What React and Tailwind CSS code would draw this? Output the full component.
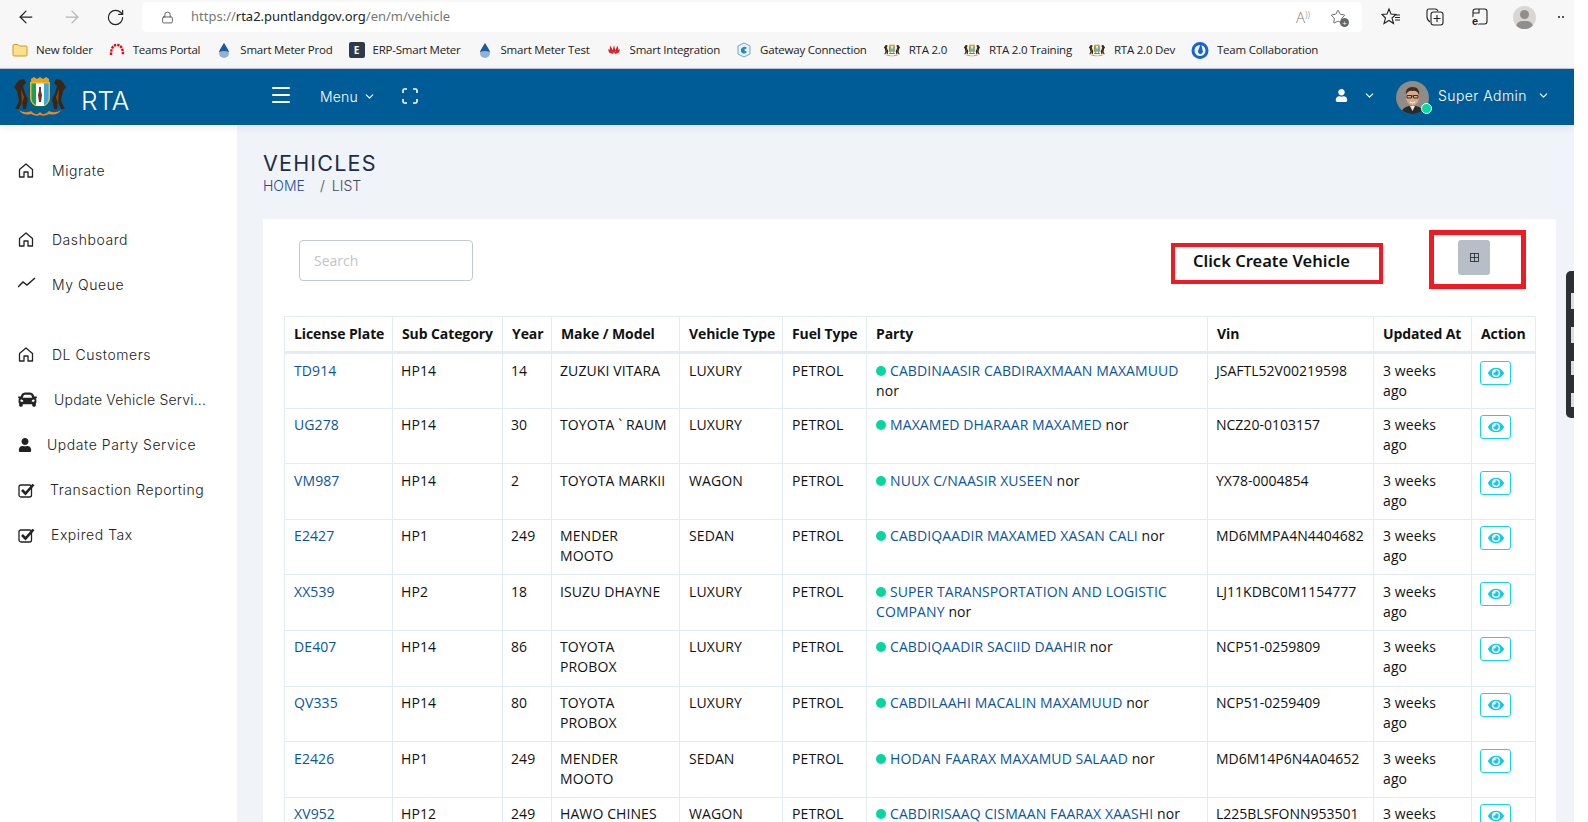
import { ArrowLeft, ArrowRight, RotateCw, Lock, Menu, ChevronDown, Star } from 'lucide-react';
import { FaCar, FaUser, FaEye } from 'react-icons/fa';

const ROWS = [
  { plate: 'TD914', sub: 'HP14', year: '14', model: 'ZUZUKI VITARA', type: 'LUXURY', party: 'CABDINAASIR CABDIRAXMAAN MAXAMUUD', vin: 'JSAFTL52V00219598' },
  { plate: 'UG278', sub: 'HP14', year: '30', model: 'TOYOTA ` RAUM', type: 'LUXURY', party: 'MAXAMED DHARAAR MAXAMED', vin: 'NCZ20-0103157' },
  { plate: 'VM987', sub: 'HP14', year: '2', model: 'TOYOTA MARKII', type: 'WAGON', party: 'NUUX C/NAASIR XUSEEN', vin: 'YX78-0004854' },
  { plate: 'E2427', sub: 'HP1', year: '249', model: 'MENDER MOOTO', type: 'SEDAN', party: 'CABDIQAADIR MAXAMED XASAN CALI', vin: 'MD6MMPA4N4404682' },
  { plate: 'XX539', sub: 'HP2', year: '18', model: 'ISUZU DHAYNE', type: 'LUXURY', party: 'SUPER TARANSPORTATION AND LOGISTIC COMPANY', vin: 'LJ11KDBC0M1154777' },
  { plate: 'DE407', sub: 'HP14', year: '86', model: 'TOYOTA PROBOX', type: 'LUXURY', party: 'CABDIQAADIR SACIID DAAHIR', vin: 'NCP51-0259809' },
  { plate: 'QV335', sub: 'HP14', year: '80', model: 'TOYOTA PROBOX', type: 'LUXURY', party: 'CABDILAAHI MACALIN MAXAMUUD', vin: 'NCP51-0259409' },
  { plate: 'E2426', sub: 'HP1', year: '249', model: 'MENDER MOOTO', type: 'SEDAN', party: 'HODAN FAARAX MAXAMUD SALAAD', vin: 'MD6M14P6N4A04652' },
  { plate: 'XV952', sub: 'HP12', year: '249', model: 'HAWO CHINES', type: 'WAGON', party: 'CABDIRISAAQ CISMAAN FAARAX XAASHI', vin: 'L225BLSFONN953501' },
];

const HEADERS = ['License Plate', 'Sub Category', 'Year', 'Make / Model', 'Vehicle Type', 'Fuel Type', 'Party', 'Vin', 'Updated At', 'Action'];

function Crest({ className }) {
  return (
    <svg viewBox="0 0 58 40" className={className}>
      <path d="M4 32 L8 24 L6 14 L3 10 L8 3 L13 2 L15 6 L12 9 L14 16 L17 22 L15 32 L12 32 L11 25 L8 32Z" fill="#3a2614" />
      <path d="M54 32 L50 24 L52 14 L55 10 L50 3 L45 2 L43 6 L46 9 L44 16 L41 22 L43 32 L46 32 L47 25 L50 32Z" fill="#3a2614" />
      <path d="M10 12 L13 20 L11 27Z M48 12 L45 20 L47 27Z" fill="#7a4a1e" />
      <path d="M20 2 L23 0 L26 2 L29 0 L32 2 L35 0 L38 2 L38 6 L20 6Z" fill="#e8a020" />
      <path d="M19 5 H39 V21 Q39 28 29 31 Q19 28 19 21Z" fill="#f0b429" />
      <path d="M20.5 6.5 H25 V28 Q20.5 26 20.5 21Z" fill="#17a05a" />
      <path d="M25 6.5 H33 V29.5 L29 30 L25 28.5Z" fill="#fff" />
      <path d="M33 6.5 H37.5 V21 Q37.5 26 33 28Z" fill="#3aa6dc" />
      <path d="M28 10 H30 V14 L31 18 L30 25 H28 L27 18 L28 14Z" fill="#6b3a1a" />
      <path d="M19 29 H39 L37 31 H21Z" fill="#0f6b4a" />
      <path d="M8 33 Q14 37 20 34 Q25 40 29 35 Q33 40 38 34 Q44 37 50 33 Q46 39 38 37 Q33 40 29 38 Q25 40 20 37 Q12 39 8 33Z" fill="#e98a1a" />
    </svg>
  );
}

function FolderIcon() {
  return (
    <svg viewBox="0 0 16 16" className="w-[16px] h-[16px]">
      <path d="M1 3.5 Q1 2.5 2 2.5 H6 L7.5 4 H14 Q15 4 15 5 V13 Q15 14 14 14 H2 Q1 14 1 13Z" fill="#fbe08e" stroke="#d09a1c" />
    </svg>
  );
}

function ArchIcon() {
  return (
    <svg viewBox="0 0 16 16" className="w-[16px] h-[16px]">
      <path d="M2 13 Q2 3 8 3 Q14 3 14 13" fill="none" stroke="#d5101e" strokeWidth="2.4" strokeDasharray="2.4 0.9" />
    </svg>
  );
}

function DropIcon() {
  return (
    <svg viewBox="0 0 16 16" className="w-[16px] h-[16px]">
      <path d="M8 1 Q13 9 13 11 A5 5 0 0 1 3 11 Q3 9 8 1Z" fill="#8fb2d6" />
      <path d="M8 1 Q13 9 13 10 Q8 8 3 10 Q3 9 8 1Z" fill="#1c5a9e" />
    </svg>
  );
}

function ErpIcon() {
  return (
    <div className="w-[16px] h-[16px] rounded-[2px] bg-[#2f3b4a] text-white text-[10px] font-bold flex items-center justify-center">E</div>
  );
}

function PetalIcon() {
  return (
    <svg viewBox="0 0 16 16" className="w-[16px] h-[16px]">
      <path d="M8 3 L9.5 9 L8 12 L6.5 9Z M2 7 L7 10 L7 12 L3 10.5Z M14 7 L9 10 L9 12 L13 10.5Z M4.5 3.5 L7 9 L6 10.5 L3.5 7.5Z M11.5 3.5 L9 9 L10 10.5 L12.5 7.5Z" fill="#d8232a" />
    </svg>
  );
}

function GatewayIcon() {
  return (
    <svg viewBox="0 0 16 16" className="w-[16px] h-[16px]">
      <path d="M8 1 L14 4 V12 L8 15 L2 12 V4Z" fill="#e8f2f8" stroke="#6fa8c8" />
      <path d="M5 7 Q8 3 11 6 L8 8 L11 10 Q8 13 5 10Z" fill="#2b86b8" />
    </svg>
  );
}

function TeamIcon() {
  return (
    <svg viewBox="0 0 18 18" className="w-[18px] h-[18px]">
      <circle cx="9" cy="9.5" r="7" fill="none" stroke="#1565d8" strokeWidth="3" />
      <path d="M10 2 L11.5 9 A2.5 2.5 0 1 1 7 10 Z" fill="#1565d8" />
    </svg>
  );
}

const BOOKMARKS = [
  { label: 'New folder', icon: <FolderIcon /> },
  { label: 'Teams Portal', icon: <ArchIcon /> },
  { label: 'Smart Meter Prod', icon: <DropIcon /> },
  { label: 'ERP-Smart Meter', icon: <ErpIcon /> },
  { label: 'Smart Meter Test', icon: <DropIcon /> },
  { label: 'Smart Integration', icon: <PetalIcon /> },
  { label: 'Gateway Connection', icon: <GatewayIcon /> },
  { label: 'RTA 2.0', icon: <Crest className="w-[18px] h-[17px]" /> },
  { label: 'RTA 2.0 Training', icon: <Crest className="w-[18px] h-[17px]" /> },
  { label: 'RTA 2.0 Dev', icon: <Crest className="w-[18px] h-[17px]" /> },
  { label: 'Team Collaboration', icon: <TeamIcon /> },
];

function BrowserBar() {
  return (
    <div className="h-[69px] bg-[#f7f7f7] border-b border-[#c8c8c8] font-['Open_Sans',sans-serif]">
      <div className="flex items-center h-[36px] pb-[2px]">
        <div className="w-[142px] flex items-center pl-[16px] text-[#222]">
          <ArrowLeft size={20} strokeWidth={1.5} />
          <ArrowRight size={20} strokeWidth={1.5} className="ml-[26px] text-[#b5b5b5]" />
          <RotateCw size={19} strokeWidth={1.5} className="ml-[24px]" />
        </div>
        <div className="w-[1220px] h-[30px] bg-white rounded-[5px] flex items-center pl-[19px]">
          <Lock size={13} strokeWidth={1.5} className="text-[#444]" />
          <span className="ml-[17px] text-[13px] text-[#777] font-['Noto_Sans',sans-serif]">
            https://<span className="text-[#222]">rta2.puntlandgov.org</span>/en/m/vehicle
          </span>
          <span className="ml-auto text-[15px] text-[#777] leading-none font-light">A<span className="text-[9px] align-top">))</span></span>
          <span className="relative ml-[20px] mr-[16px]">
            <Star size={16} strokeWidth={1.3} className="text-[#555]" />
            <span className="absolute right-[-3px] bottom-[-2px] w-[9px] h-[9px] rounded-full bg-[#666] text-white text-[8px] leading-[9px] text-center">+</span>
          </span>
        </div>
        <div className="flex items-center text-[#222]">
          <svg viewBox="0 0 20 20" className="w-[20px] h-[20px] ml-[19px]" fill="none" stroke="currentColor" strokeWidth="1.1">
            <path d="M8 2 L10 7 L15 7.5 L11 11 L12.5 16.5 L8 13.5 L3 16.5 L4.5 11 L1 7.5 L6 7Z" />
            <path d="M14 10.5 H19 M14 13 H19 M15 8 H19" />
          </svg>
          <svg viewBox="0 0 20 20" className="w-[20px] h-[20px] ml-[24px]" fill="none" stroke="currentColor" strokeWidth="1.1">
            <path d="M5 15 Q2 13 2 10 V4 Q2 2 4 2 H10 Q12 2 13 4" />
            <rect x="6" y="5" width="12" height="13" rx="2.5" />
            <path d="M12 8 V15 M8.5 11.5 H15.5" />
          </svg>
          <svg viewBox="0 0 20 20" className="w-[20px] h-[20px] ml-[24px]" fill="none" stroke="currentColor" strokeWidth="1.1">
            <rect x="4" y="2" width="14" height="15" rx="2.5" />
            <path d="M4 6 H10 V2" />
            <circle cx="6" cy="14" r="4.5" fill="#f7f7f7" stroke="none" />
            <text x="6" y="17.5" textAnchor="middle" fontSize="11" fontWeight="700" fill="#222" stroke="none" fontFamily="Liberation Sans, sans-serif">e</text>
          </svg>
          <div className="relative ml-[24px] w-[23px] h-[23px] rounded-full bg-[#d9d6d3] overflow-hidden">
            <div className="absolute left-[7px] top-[4px] w-[9px] h-[9px] rounded-full bg-[#8f8f8f]" />
            <div className="absolute left-[3px] top-[15px] w-[17px] h-[12px] rounded-full bg-[#8f8f8f]" />
          </div>
          <span className="ml-[22px] flex gap-[2px]">
            <span className="w-[2px] h-[2px] rounded-full bg-[#222]" />
            <span className="w-[2px] h-[2px] rounded-full bg-[#222]" />
          </span>
        </div>
      </div>
      <div className="flex items-center h-[28px] pl-[12px] gap-[16px] text-[11.5px] text-[#222] tracking-[-0.22px]">
        {BOOKMARKS.map((b) => (
          <div key={b.label} className="flex items-center gap-[8px] whitespace-nowrap">
            {b.icon}
            <span>{b.label}</span>
          </div>
        ))}
      </div>
    </div>
  );
}

function Avatar() {
  return (
    <div className="relative w-[33px] h-[33px]">
      <svg viewBox="0 0 33 33" className="w-[33px] h-[33px] rounded-full">
        <rect width="33" height="33" fill="#8f8b86" />
        <path d="M5 33 Q6 26 13 25 H20 Q27 26 28 33Z" fill="#2a2a2c" />
        <path d="M14 25 L16.5 30 L19 25Z" fill="#eee" />
        <ellipse cx="16.5" cy="16" rx="6.5" ry="8.5" fill="#d8a98c" />
        <path d="M10 14 Q9 6 16.5 6 Q24 6 23 14 Q21 9 16.5 10 Q12 9 10 14Z" fill="#3e2c20" />
        <path d="M11 14.5 H15.5 V17 H11Z M17.5 14.5 H22 V17 H17.5Z M15.5 15 H17.5" fill="none" stroke="#222" strokeWidth="0.9" />
        <path d="M14 21 Q16.5 23 19 21" fill="none" stroke="#fff" strokeWidth="1" />
      </svg>
      <span className="absolute right-[-3px] bottom-0 w-[11px] h-[11px] rounded-full bg-[#06d6a0] border border-white" />
    </div>
  );
}

function TopNav() {
  return (
    <header className="relative z-10 h-[56px] bg-[#005c97] text-white flex items-center font-['Inter',sans-serif] shadow-[0_2px_8px_rgba(60,80,120,0.1)]">
      <div className="w-[272px] flex items-center pl-[11px]">
        <Crest className="w-[58px] h-[40px]" />
        <span className="ml-[12px] mt-[8px] text-[26px] font-light leading-none">RTA</span>
      </div>
      <Menu size={24} strokeWidth={2} className="-ml-[3px] -mt-[5px]" />
      <span className="ml-[27px] -mt-[2px] text-[14px] font-light tracking-[0.2px]">Menu</span>
      <ChevronDown size={13} className="ml-[5px] -mt-[2px]" />
      <svg viewBox="0 0 16 16" className="w-[16px] h-[16px] ml-[26px] -mt-[2px]" fill="none" stroke="currentColor" strokeWidth="1.6">
        <path d="M1 5 V2.5 Q1 1 2.5 1 H5 M11 1 H13.5 Q15 1 15 2.5 V5 M15 11 V13.5 Q15 15 13.5 15 H11 M5 15 H2.5 Q1 15 1 13.5 V11" />
      </svg>
      <div className="ml-auto flex items-center pr-[24px] -mt-[3px]">
        <FaUser size={13} />
        <ChevronDown size={13} className="ml-[15px]" />
        <div className="ml-[20px] mt-[3px]"><Avatar /></div>
        <span className="ml-[9px] text-[14px] font-light tracking-[0.45px]">Super Admin</span>
        <ChevronDown size={13} className="ml-[10px]" />
      </div>
    </header>
  );
}

function HomeIcon() {
  return (
    <svg viewBox="0 0 16 15" className="w-[16px] h-[15px]" fill="none" stroke="#222" strokeWidth="1.3" strokeLinejoin="round">
      <path d="M8 1 L1.5 6.5 V14 H6 V9 H10 V14 H14.5 V6.5 Z" />
    </svg>
  );
}

function CheckBoxIcon() {
  return (
    <svg viewBox="0 0 18 16" className="w-[18px] h-[16px]" fill="none" stroke="#222">
      <rect x="1" y="3" width="12.5" height="12" rx="2" strokeWidth="1.3" />
      <path d="M4 8 L7.5 11.5 L15.5 2.5" strokeWidth="2.6" />
    </svg>
  );
}

function SideItem({ icon, label, textClass }) {
  return (
    <div className="h-[45px] flex items-center pl-[18px] text-[14px] font-light tracking-[0.55px] text-[#222] whitespace-nowrap">
      <span className="w-[20px] flex justify-start">{icon}</span>
      <span className={textClass}>{label}</span>
    </div>
  );
}

function Sidebar() {
  return (
    <aside className="w-[237px] shrink-0 bg-white pt-[23px] shadow-[3px_0_10px_rgba(60,80,120,0.1)] font-['Inter',sans-serif]">
      <SideItem icon={<HomeIcon />} label="Migrate" textClass="ml-[14px]" />
      <div className="h-[24px]" />
      <SideItem icon={<HomeIcon />} label="Dashboard" textClass="ml-[14px]" />
      <SideItem
        icon={
          <svg viewBox="0 0 18 12" className="w-[18px] h-[12px] -mt-[4px]" fill="none" stroke="#222" strokeWidth="1.5">
            <path d="M0 10 L5 5 L9 8 L17 1" />
          </svg>
        }
        label="My Queue"
        textClass="ml-[14px]"
      />
      <div className="h-[25px]" />
      <SideItem icon={<HomeIcon />} label="DL Customers" textClass="ml-[14px]" />
      <SideItem icon={<FaCar size={19} className="text-[#222]" />} label="Update Vehicle Servi..." textClass="ml-[16px] tracking-[0.2px]" />
      <SideItem icon={<FaUser size={14} className="text-[#222]" />} label="Update Party Service" textClass="ml-[9px]" />
      <SideItem icon={<CheckBoxIcon />} label="Transaction Reporting" textClass="ml-[12px]" />
      <SideItem icon={<CheckBoxIcon />} label="Expired Tax" textClass="ml-[13px]" />
    </aside>
  );
}

function VehicleTable() {
  return (
    <table className="table-fixed border-collapse w-[1251px] text-[14px] leading-[20px] tracking-[0.1px] text-[#111] font-['Open_Sans',sans-serif]">
      <colgroup>
        <col className="w-[108px]" />
        <col className="w-[110px]" />
        <col className="w-[49px]" />
        <col className="w-[128px]" />
        <col className="w-[103px]" />
        <col className="w-[84px]" />
        <col className="w-[341px]" />
        <col className="w-[166px]" />
        <col className="w-[98px]" />
        <col className="w-[64px]" />
      </colgroup>
      <thead>
        <tr className="h-[36px] border-b-[3px] border-[#e3ebf3]">
          {HEADERS.map((h) => (
            <th key={h} className="border border-[#e3ebf3] border-b-[3px] px-[9px] pb-[1px] text-left font-bold tracking-[-0.1px] whitespace-nowrap">{h}</th>
          ))}
        </tr>
      </thead>
      <tbody>
        {ROWS.map((r) => (
          <tr key={r.plate} className="h-[55.6px] align-top">
            <td className="border border-[#e3ebf3] px-[9px] pt-[6.5px]"><a className="text-[#0a559c]">{r.plate}</a></td>
            <td className="border border-[#e3ebf3] px-[8px] pt-[6.5px]">{r.sub}</td>
            <td className="border border-[#e3ebf3] px-[8px] pt-[6.5px]">{r.year}</td>
            <td className="border border-[#e3ebf3] px-[8px] pt-[6.5px]">{r.model}</td>
            <td className="border border-[#e3ebf3] px-[9px] pt-[6.5px]">{r.type}</td>
            <td className="border border-[#e3ebf3] px-[9px] pt-[6.5px]">PETROL</td>
            <td className="border border-[#e3ebf3] px-[9px] pt-[6.5px]">
              <span className="inline-block w-[10px] h-[10px] rounded-full bg-[#06d6a0] mr-[4px]" />
              <a className="text-[#0a559c]">{r.party}</a> nor
            </td>
            <td className="border border-[#e3ebf3] px-[8px] pt-[6.5px] tracking-normal whitespace-nowrap">{r.vin}</td>
            <td className="border border-[#e3ebf3] px-[9px] pt-[6.5px]">3 weeks ago</td>
            <td className="border border-[#e3ebf3] px-[8px] pt-[6.5px]">
              <button className="w-[31px] h-[24px] border border-[#17d3e8] rounded-[3px] flex items-center justify-center text-[#17c9e6]">
                <FaEye size={16} />
              </button>
            </td>
          </tr>
        ))}
      </tbody>
    </table>
  );
}

export default function App() {
  return (
    <div className="w-[1588px] h-[822px] overflow-hidden bg-white">
      <div className="relative w-[1574px] h-[822px] overflow-hidden flex flex-col">
        <BrowserBar />
        <TopNav />
        <div className="flex flex-1 min-h-0">
          <Sidebar />
          <main className="flex-1 bg-[#f0f3f8] pl-[26px] pr-[18px] pt-[26px]">
            <h1 className="text-[21.5px] leading-[24px] font-normal tracking-[1.2px] text-[#1c2b4a] font-['Inter',sans-serif]">VEHICLES</h1>
            <div className="mt-[2px] text-[14px] leading-[18px] font-light font-['Inter',sans-serif] text-[#3b4a60]">
              <span className="text-[#1f4f9c]">HOME</span>
              <span className="ml-[15px]">/</span>
              <span className="ml-[7px]">LIST</span>
            </div>
            <section className="mt-[24px] bg-white px-[21px] w-[1293px]">
              <div className="h-[97px] flex items-start">
                <input
                  placeholder="Search"
                  className="mt-[21px] ml-[15px] w-[174px] h-[41px] border border-[#c3c9d2] rounded-[4px] px-[14px] text-[14px] font-['Open_Sans',sans-serif] placeholder:text-[#c0c4ca] outline-none"
                />
                <div className="ml-auto mt-[24px] w-[212px] h-[41px] border-[4px] border-[#ed1c24] flex items-center pl-[18px] pb-[4px] text-[16.5px] font-semibold text-[#111] font-['Noto_Sans',sans-serif] whitespace-nowrap">
                  Click Create Vehicle
                </div>
                <div className="ml-[46px] mr-[9px] mt-[11px] w-[97px] h-[59px] border-[5px] border-[#ed1c24] pl-[24px] pt-[5px]">
                  <button className="w-[32px] h-[35px] bg-[#b8bec8] rounded-[3px] flex items-center justify-center">
                    <svg viewBox="0 0 10 10" className="w-[9px] h-[9px]" fill="none" stroke="#222" strokeWidth="0.9">
                      <rect x="0.5" y="0.5" width="9" height="9" />
                      <path d="M5 0.5 V9.5 M0.5 5 H9.5" />
                    </svg>
                  </button>
                </div>
              </div>
              <VehicleTable />
            </section>
          </main>
        </div>
        {/* floating dark widget clipped at the right edge */}
        <div className="absolute right-0 top-[271px] w-[8px] h-[147px] bg-[#2c2f33] rounded-l-[5px] flex flex-col gap-[18px] pl-[5px] pt-[22px]">
          <span className="w-[3px] h-[16px] bg-[#ddd]" />
          <span className="w-[3px] h-[16px] bg-[#ddd]" />
          <span className="w-[3px] h-[14px] bg-[#ddd]" />
          <span className="w-[3px] h-[14px] bg-[#ddd]" />
        </div>
      </div>
    </div>
  );
}
